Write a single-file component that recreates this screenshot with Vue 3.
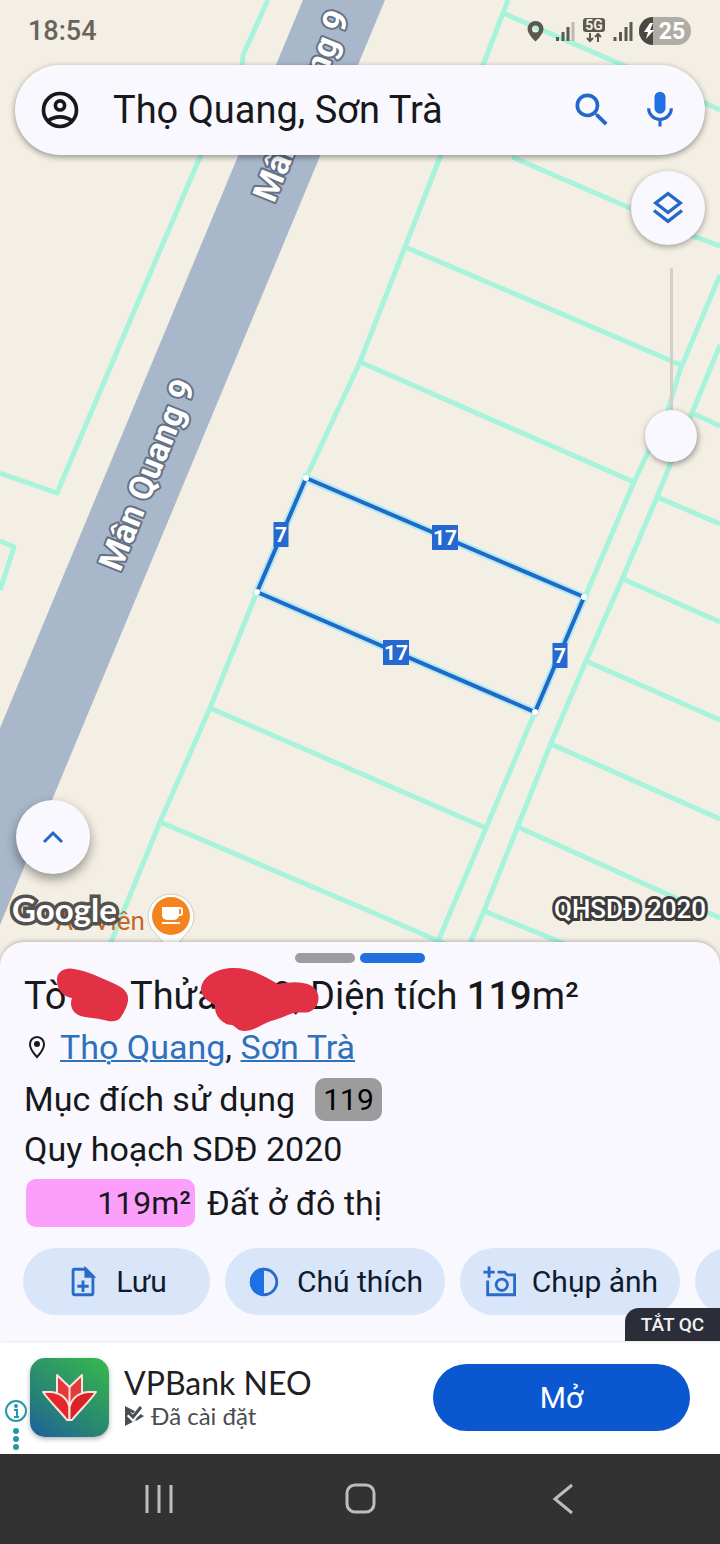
<template>
  <div class="screen">
    <section class="map-area">
      <svg class="map" viewBox="0 0 720 966" preserveAspectRatio="xMidYMin slice" aria-hidden="true">
        <rect width="720" height="966" fill="#f3efe4" />
        <polygon points="303,0 385,0 0,925 0,728" fill="#a8b7ca" />
        <g class="plots">
          <polyline v-for="line in plotLines" :key="line" :points="line" />
        </g>
        <polygon class="plot-glow" :points="selectedPlot" />
        <polygon class="plot-edge" :points="selectedPlot" />
        <circle v-for="c in corners" :key="c.x" :cx="c.x" :cy="c.y" r="3" fill="#fff" />
        <g v-for="e in edges" :key="e.x">
          <rect :x="e.x - e.w / 2" :y="e.y - 12" :width="e.w" height="25" fill="#2468d0" />
          <text class="edge-text" :x="e.x" :y="e.y + 8">{{ e.label }}</text>
        </g>
        <text class="road-name" transform="translate(274 204) rotate(-68)">Mân Quang 9</text>
        <text class="road-name" transform="translate(120 573) rotate(-68)">Mân Quang 9</text>
        <text class="place-name" x="56" y="930">An Viên</text>
        <path d="M171 894a23 23 0 0 0-23 23c0 13 12 19 18 30h10c6-11 18-17 18-30a23 23 0 0 0-23-23z" fill="#fff" stroke="#cfc9c0" stroke-width="1" />
        <circle cx="171" cy="916" r="19" fill="#f5841f" />
        <path d="M162 907h17v8a5 5 0 0 1-5 5h-7a5 5 0 0 1-5-5zM162 922h18v2h-18z" fill="#fff" />
        <rect x="177" y="908" width="5" height="7" rx="2" fill="none" stroke="#fff" stroke-width="2" />
      </svg>

      <header class="status-bar">
        <span class="clock">18:54</span>
        <svg width="166" height="30" viewBox="0 0 166 30" aria-hidden="true">
          <path d="M9.500 5a8 8 0 0 0-8 8c0 5.500 8 12.500 8 12.500s8-7 8-12.500a8 8 0 0 0-8-8zm0 4.500a3.500 3.500 0 1 1 0 7 3.500 3.500 0 0 1 0-7z" fill="#5b5850" fill-rule="evenodd" />
          <g stroke="#5b5850" stroke-width="3">
            <path d="M31.500 21v4M37 16v9M42 11v14" />
            <path d="M47 6v19" opacity=".35" />
            <path d="M89 21v4M94.500 16v9M100 11v14M105 6v19" />
          </g>
          <rect x="57" y="2" width="22" height="14" rx="3" fill="#5b5850" />
          <text x="68" y="14" class="net-text">5G</text>
          <path d="M64 17v8M61 22l3 3 3-3M72 26v-8M69 21l3-3 3 3" fill="none" stroke="#5b5850" stroke-width="2" />
          <rect x="113" y="1" width="52" height="28" rx="14" fill="#b0aca3" />
          <path d="M127 1a14 14 0 0 0 0 28z" fill="#4b4842" />
          <path d="M124 7l-6 9h4l-2 7 8-9h-4l3-7z" fill="#fff" />
          <text x="146" y="23" class="battery-text">25</text>
        </svg>
      </header>

      <form class="search-bar" @submit.prevent>
        <button type="button" class="icon-btn" aria-label="Tài khoản">
          <svg width="44" height="44" viewBox="0 0 24 24" fill="none" stroke="#17181c" stroke-width="2">
            <circle cx="12" cy="12" r="9" />
            <circle cx="12" cy="9.500" r="2.500" />
            <path d="M5.500 18c3.500-3 9.500-3 13 0" />
          </svg>
        </button>
        <input v-model="query" type="text" class="search-input" aria-label="Tìm kiếm" />
        <button type="submit" class="icon-btn search-btn" aria-label="Tìm">
          <svg width="44" height="44" viewBox="0 0 24 24" fill="#2468c8">
            <path d="M15.500 14h-.79l-.28-.27A6.470 6.470 0 0 0 16 9.500 6.500 6.500 0 1 0 9.500 16c1.610 0 3.090-.59 4.230-1.570l.27.28v.79l5 4.990L20.490 19l-4.990-5zm-6 0a4.500 4.500 0 1 1 0-9 4.500 4.500 0 0 1 0 9z" />
          </svg>
        </button>
        <button type="button" class="icon-btn" aria-label="Giọng nói">
          <svg width="44" height="44" viewBox="0 0 24 24" fill="none">
            <rect x="9" y="2" width="6" height="12" rx="3" fill="#1f6fe5" />
            <path d="M5.800 11a6.200 6.200 0 0 0 12.400 0M12 17v4" stroke="#2468c8" stroke-width="1.700" />
          </svg>
        </button>
      </form>

      <div class="map-tools">
        <button type="button" class="round-btn" aria-label="Lớp bản đồ">
          <svg width="40" height="40" viewBox="0 0 24 24" fill="none" stroke="#2468c8" stroke-width="2">
            <path d="M12 3.300l7.400 5.700-7.400 5.700L4.600 9z" />
            <path d="M3.600 13.500L12 20l8.400-6.500" />
          </svg>
        </button>
        <input v-model="opacity" type="range" min="0" max="100" class="opacity-slider" aria-label="Độ mờ" />
      </div>

      <div class="map-bottom">
        <button type="button" class="round-btn expand-btn" aria-label="Mở rộng">
          <svg width="24" height="24" viewBox="0 0 24 24" fill="none" stroke="#2468c8" stroke-width="3">
            <path d="M3 17l9-9 9 9" />
          </svg>
        </button>
        <div class="map-credits">
          <span class="google">Google</span>
          <span class="layer-name">QHSDĐ 2020</span>
        </div>
      </div>
    </section>

    <section class="sheet">
      <div class="pager">
        <span class="page-dot"></span>
        <span class="page-dot active"></span>
      </div>
      <h1 class="title">
        <span>Tò</span>
        <span>Thửa</span>
        <span>9,</span>
        <span>Diện tích <b>119</b>m²</span>
        <svg class="scribble" width="300" height="66" viewBox="0 0 300 66" aria-hidden="true">
          <path d="M33 7C34 0 42-4 50-2C63 0 78 7 91 13C100 17 105 22 104 30C103 36 100 41 97 46C94 51 87 51 80 49C72 47 64 47 57 45C49 43 45 35 48 27C41 26 32 20 33 7z" />
          <path d="M177 17C179 4 195-3 210-3C228-3 241 6 254 13C265 11 277 10 286 14C296 19 297 31 290 38C284 44 276 40 269 42C262 45 254 48 247 50C238 53 230 60 220 60C214 60 212 56 208 54C200 54 190 46 191 34C184 30 177 27 177 17z" />
        </svg>
      </h1>
      <p class="row">
        <svg class="pin" width="26" height="30" viewBox="0 0 26 30" fill="none" aria-hidden="true">
          <path d="M13 5a7 7 0 0 0-7 7.500c0 5 7 12.500 7 12.500s7-7.500 7-12.500A7 7 0 0 0 13 5z" stroke="#17181c" stroke-width="2" />
          <circle cx="13" cy="12" r="3" fill="#17181c" />
        </svg>
        <span><a href="#">Thọ Quang</a>, <a href="#">Sơn Trà</a></span>
      </p>
      <p class="row">Mục đích sử dụng <span class="chip">119</span></p>
      <p class="row plan">Quy hoạch SDĐ 2020</p>
      <p class="row land"><span class="land-chip">119m²</span> Đất ở đô thị</p>
      <div class="actions">
        <button type="button" class="action short">
          <svg width="34" height="34" viewBox="0 0 24 24" fill="none" stroke="#2a6bc8" stroke-width="2">
            <path d="M14 3H6a1 1 0 0 0-1 1v16a1 1 0 0 0 1 1h12a1 1 0 0 0 1-1V8z" />
            <path d="M14 3v5h5z" fill="#2a6bc8" />
            <path d="M12 11v8M8 15h8" />
          </svg>
          Lưu
        </button>
        <button type="button" class="action">
          <svg width="34" height="34" viewBox="0 0 24 24">
            <circle cx="12" cy="12" r="9" fill="none" stroke="#2a6bc8" stroke-width="2" />
            <path d="M12 2a10 10 0 0 0 0 20z" fill="#1f6fe5" />
          </svg>
          Chú thích
        </button>
        <button type="button" class="action">
          <svg width="34" height="34" viewBox="0 0 24 24" fill="none" stroke="#2a6bc8" stroke-width="2">
            <path d="M5 1v8M1 5h8M11 5h5l2 2h5v14H4V11" />
            <circle cx="14" cy="14" r="4" />
          </svg>
          Chụp ảnh
        </button>
        <button type="button" class="action" aria-label="Thêm"></button>
      </div>
      <button type="button" class="hide-ad">TẮT QC</button>
    </section>

    <section class="ad">
      <div class="ad-info">
        <svg width="22" height="52" viewBox="0 0 22 52" aria-hidden="true">
          <circle cx="11" cy="12" r="10" fill="none" stroke="#2499a8" stroke-width="2" />
          <path d="M9 11h3v7M9 18h5" fill="none" stroke="#2499a8" stroke-width="2" />
          <g fill="#2499a8">
            <circle cx="11" cy="7" r="2" />
            <circle cx="11" cy="32" r="3" />
            <circle cx="11" cy="40" r="3" />
            <circle cx="11" cy="48" r="3" />
          </g>
        </svg>
      </div>
      <div class="ad-logo">
        <svg width="56" height="48" viewBox="0 0 56 48" stroke="#fbe3de" stroke-width="2" stroke-linejoin="round" aria-hidden="true">
          <path d="M15 1l12.500 12L40 1v22L27.500 34 15 23z" fill="#e5383b" />
          <path d="M27.500 13v20" />
          <path d="M1 18h8c9 1 16 6 18.500 15v13H25C17 36 8 28 1 18z" fill="#e3272a" />
          <path d="M54 18h-8c-9 1-16 6-18.500 15v13H30c8-10 17-18 24-28z" fill="#d92226" />
        </svg>
      </div>
      <div class="ad-text">
        <div class="ad-title">VPBank NEO</div>
        <div class="ad-sub">
          <svg width="21" height="22" viewBox="0 0 21 22" aria-hidden="true">
            <path d="M1 1l19 10L1 21z" fill="#4a4d51" />
            <path d="M5 9l4 4 9-10" fill="none" stroke="#fff" stroke-width="6" />
            <path d="M13 12l7-1-8 5z" fill="#4a4d51" />
            <path d="M5 8l4 4 8-10" fill="none" stroke="#4a4d51" stroke-width="3" />
          </svg>
          Đã cài đặt
        </div>
      </div>
      <button type="button" class="open-btn">Mở</button>
    </section>

    <nav class="nav-bar">
      <button type="button" aria-label="Gần đây">
        <svg width="32" height="32" viewBox="0 0 32 32"><path d="M5 2v28M17 2v28M29 2v28" /></svg>
      </button>
      <button type="button" aria-label="Trang chính">
        <svg width="32" height="32" viewBox="0 0 32 32"><rect x="3" y="2" width="27" height="27" rx="8" /></svg>
      </button>
      <button type="button" aria-label="Quay lại">
        <svg width="32" height="32" viewBox="0 0 32 32"><path d="M26 2L9 16l17 14" /></svg>
      </button>
    </nav>
  </div>
</template>

<script setup>
import { ref } from 'vue'

const query = ref('Thọ Quang, Sơn Trà')
const opacity = ref(0)

const plotLines = [
  '268,0 243,55 242,68 200,157 155,262 57,493 0,473',
  '0,541 14,547 0,590',
  '508,0 485,60 440,157 405,247 360,362 306,478 257,592 210,708 160,822 124,910 108,950',
  '503,13 625,66 720,110',
  '512,157 630,208 690,235 720,246',
  '405,247 681,365',
  '360,362 634,482',
  '210,708 486,828',
  '160,822 360,907 450,946',
  '720,275 680,370 668,410 634,482 585,597 535,712 486,828 436,946',
  '720,345 692,413 670,465 657,497 623,577 586,661 551,743 518,826 484,911 467,950',
  '692,413 720,426',
  '657,497 720,524',
  '623,579 720,622',
  '586,661 720,720',
  '551,744 720,819',
  '518,827 720,918',
  '484,911 570,946'
]

const selectedPlot = '306,478 584,597 535,712 257,592'

const corners = [
  { x: 306, y: 478 },
  { x: 584, y: 597 },
  { x: 535, y: 712 },
  { x: 257, y: 592 }
]

const edges = [
  { x: 281, y: 534, w: 15, label: '7' },
  { x: 445, y: 537, w: 26, label: '17' },
  { x: 396, y: 652, w: 26, label: '17' },
  { x: 560, y: 655, w: 15, label: '7' }
]
</script>

<style>
body {
  margin: 0;
  background: #f9f8fe;
}
</style>

<style scoped>
.screen {
  display: flex;
  flex-direction: column;
  min-height: 100vh;
  font-family: Roboto, "Noto Sans", sans-serif;
  color: #17181c;
}

button {
  padding: 0;
  border: none;
  background: none;
  font-family: inherit;
  cursor: pointer;
}

svg {
  display: block;
  flex-shrink: 0;
}

.map-area {
  position: relative;
  flex: 1;
  display: flex;
  flex-direction: column;
}

.map {
  position: absolute;
  top: 0;
  left: 0;
  width: 100%;
  height: calc(100% + 24px);
}

.plots {
  fill: none;
  stroke: #a8f3dc;
  stroke-width: 5;
  stroke-linejoin: round;
}

.plot-glow {
  fill: none;
  stroke: #b4eaf5;
  stroke-width: 8;
}

.plot-edge {
  fill: none;
  stroke: #2069c6;
  stroke-width: 4;
}

.edge-text {
  fill: #fff;
  font-size: 21px;
  font-weight: 700;
  text-anchor: middle;
}

.road-name {
  fill: #fff;
  stroke: #657184;
  stroke-width: 4px;
  stroke-linejoin: round;
  paint-order: stroke;
  font-size: 34px;
  font-weight: 700;
}

.place-name {
  fill: #c5662a;
  font-size: 26px;
}

.status-bar {
  position: relative;
  display: flex;
  justify-content: space-between;
  align-items: center;
  height: 62px;
  margin-bottom: 3px;
  padding: 0 28px;
}

.clock {
  font-size: 27px;
  font-weight: 500;
  color: #68645b;
}

.net-text {
  fill: #f3efe4;
  font-size: 14px;
  font-weight: 700;
  text-anchor: middle;
}

.battery-text {
  fill: #fff;
  font-size: 23px;
  font-weight: 700;
  text-anchor: middle;
}

.search-bar {
  position: relative;
  display: flex;
  align-items: center;
  height: 90px;
  box-sizing: border-box;
  margin: 0 15px;
  padding: 0 23px;
  border-radius: 45px;
  background: #f9f8fe;
  box-shadow: 0 2px 6px rgba(0, 0, 0, 0.4);
}

.search-input {
  flex: 1;
  min-width: 0;
  margin: 0 31px;
  padding: 0;
  border: none;
  outline: none;
  background: none;
  font-family: inherit;
  font-size: 38px;
  color: #17181c;
}

.search-btn {
  margin-right: 24px;
}

.map-tools {
  position: relative;
  display: flex;
  flex-direction: column;
  align-items: flex-end;
  padding: 16px 15px 0;
}

.round-btn {
  display: flex;
  align-items: center;
  justify-content: center;
  width: 74px;
  height: 74px;
  border-radius: 50%;
  background: #f9f8fe;
  box-shadow: 0 2px 6px rgba(0, 0, 0, 0.35);
}

.opacity-slider {
  appearance: none;
  writing-mode: vertical-lr;
  direction: rtl;
  width: 52px;
  height: 194px;
  margin: 23px 8px 0 0;
  background: linear-gradient(#d3d0c7, #d3d0c7) center / 3px 100% no-repeat;
}

.opacity-slider::-webkit-slider-thumb {
  appearance: none;
  width: 52px;
  height: 52px;
  border-radius: 50%;
  background: #f9f8fe;
  box-shadow: 1px 2px 6px rgba(0, 0, 0, 0.4);
}

.map-bottom {
  position: relative;
  margin-top: auto;
  padding: 0 14px 16px 12px;
}

.expand-btn {
  margin: 0 4px;
  box-shadow: 0 5px 12px rgba(0, 0, 0, 0.4);
}

.map-credits {
  display: flex;
  justify-content: space-between;
  align-items: center;
  height: 34px;
  margin-top: 18px;
  color: #fff;
}

.google {
  font-family: Lato, sans-serif;
  font-size: 33px;
  font-weight: 700;
  line-height: 36px;
  -webkit-text-stroke: 7px #55524e;
  paint-order: stroke;
}

.layer-name {
  font-size: 26px;
  font-weight: 500;
  -webkit-text-stroke: 6px #3d3c3a;
  paint-order: stroke;
}

.sheet {
  position: relative;
  padding: 11px 24px 26px;
  border-radius: 24px 24px 0 0;
  background: #f9f8fe;
  box-shadow: 0 -1px 4px rgba(0, 0, 0, 0.25);
  overflow: hidden;
}

.pager {
  display: flex;
  justify-content: center;
  gap: 5px;
  margin-bottom: 8px;
}

.page-dot {
  width: 60px;
  height: 10px;
  border-radius: 5px;
  background: #9d9d9f;
}

.page-dot.active {
  width: 65px;
  background: #2270e0;
}

.title {
  position: relative;
  display: grid;
  grid-template-columns: 106px 142px 38px auto;
  margin: 0;
  font-size: 38px;
  font-weight: 400;
  line-height: 50px;
  white-space: nowrap;
}

.title b {
  font-weight: 500;
}

.scribble {
  position: absolute;
  top: 0;
  left: 0;
  overflow: visible;
  fill: #e23045;
}

.row {
  display: flex;
  align-items: center;
  height: 52px;
  margin: 0;
  font-size: 34px;
  white-space: nowrap;
}

.row a {
  color: #2e72bd;
  text-decoration-thickness: 2px;
}

.pin {
  margin-right: 10px;
}

.chip {
  margin-left: 20px;
  padding: 0 8px;
  border-radius: 10px;
  background: #9c9c9c;
  color: #000;
  font-size: 30px;
  line-height: 43px;
}

.row.plan {
  height: 48px;
}

.row.land {
  height: 60px;
}

.land-chip {
  width: 169px;
  box-sizing: border-box;
  margin: 0 12px 0 2px;
  padding: 0 4px;
  border-radius: 10px;
  background: #fb9ffa;
  font-size: 32px;
  line-height: 48px;
  text-align: right;
}

.actions {
  display: flex;
  gap: 15px;
  margin: 15px -24px 0 -1px;
  overflow: hidden;
}

.action {
  display: flex;
  flex-shrink: 0;
  align-items: center;
  justify-content: center;
  gap: 16px;
  width: 220px;
  height: 67px;
  border-radius: 34px;
  background: #d9e6fa;
  color: #101a2c;
  font-size: 30px;
  white-space: nowrap;
}

.action.short {
  width: 187px;
}

.hide-ad {
  position: absolute;
  right: 0;
  bottom: 0;
  width: 95px;
  height: 33px;
  border-radius: 14px 0 0 0;
  background: #2b2e38;
  color: #f2f2f5;
  font-size: 19px;
  font-weight: 500;
}

.ad {
  display: flex;
  align-items: center;
  height: 113px;
  padding-right: 30px;
  background: #fff;
}

.ad-info {
  display: flex;
  align-items: flex-end;
  width: 25px;
  height: 107px;
  padding-left: 5px;
}

.ad-logo {
  display: flex;
  align-items: center;
  justify-content: center;
  width: 79px;
  height: 79px;
  border-radius: 15px;
  background: linear-gradient(35deg, #1d5fa0 0%, #278276 35%, #2f9b62 65%, #35bb4c 100%);
  box-shadow: 0 2px 5px rgba(0, 0, 0, 0.3);
}

.ad-text {
  flex: 1;
  margin-left: 15px;
}

.ad-title {
  font-family: Lato, sans-serif;
  font-size: 32px;
  line-height: 36px;
  color: #1f2023;
}

.ad-sub {
  display: flex;
  align-items: center;
  gap: 6px;
  font-family: Lato, sans-serif;
  font-size: 24px;
  line-height: 30px;
  color: #4a4d51;
}

.open-btn {
  width: 257px;
  height: 67px;
  border-radius: 34px;
  background: #0b57d0;
  color: #fff;
  font-size: 30px;
}

.nav-bar {
  display: grid;
  grid-template-columns: repeat(3, 1fr);
  height: 90px;
  padding: 0 8%;
  background: #323232;
}

.nav-bar button {
  display: flex;
  align-items: center;
  justify-content: center;
}

.nav-bar svg {
  fill: none;
  stroke: #bdbdbd;
  stroke-width: 3;
}
</style>
